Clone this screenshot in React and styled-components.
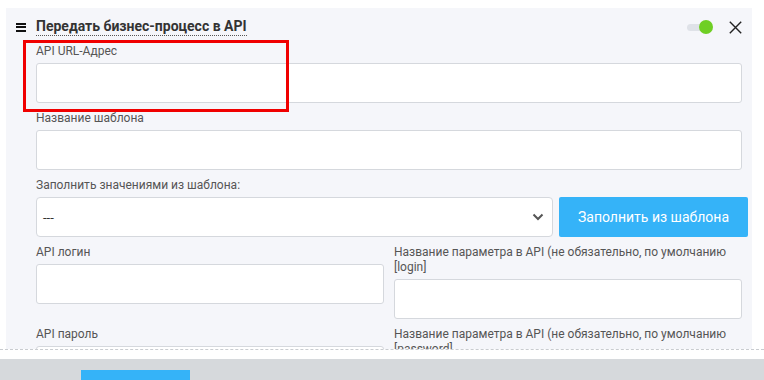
import React from "react";
import styled, { createGlobalStyle } from "styled-components";

const GlobalStyle = createGlobalStyle`
  html, body { margin: 0; padding: 0; background: #fff; }
  body { font-family: Roboto, "Liberation Sans", Arial, sans-serif; }
  * { box-sizing: border-box; }
`;

const Page = styled.div`
  width: 764px;
  height: 380px;
  overflow: hidden;
  display: flex;
  flex-direction: column;
  background: #fff;
`;

const ScrollArea = styled.div`
  height: 349px;
  flex: none;
  overflow: hidden;
  padding: 8px 12px 0 6px;
`;

const Panel = styled.section`
  position: relative;
  background: #f5f6fa;
  padding: 10px 10px 0 10px;
  min-height: 400px;
`;

const Header = styled.header`
  display: flex;
  align-items: center;
  height: 18px;
`;

const Burger = styled.span`
  display: flex;
  flex-direction: column;
  justify-content: space-between;
  width: 10px;
  height: 9px;
  margin-right: 10px;
  & > i {
    display: block;
    height: 2px;
    background: #111;
  }
`;

const Title = styled.h2`
  margin: 0;
  font-size: 14px;
  font-weight: 700;
  line-height: 17px;
  color: #333;
  border-bottom: 1px dotted #555;
`;

const HeaderTools = styled.div`
  margin-left: auto;
  display: flex;
  align-items: center;
  gap: 16px;
`;

const Toggle = styled.span`
  position: relative;
  width: 26px;
  height: 14px;
  display: block;
  &::before {
    content: "";
    position: absolute;
    left: 0;
    top: 4px;
    width: 24px;
    height: 7px;
    border-radius: 4px;
    background: #dfe2e8;
  }
  &::after {
    content: "";
    position: absolute;
    right: 0;
    top: 0;
    width: 14px;
    height: 14px;
    border-radius: 50%;
    background: #6fcf24;
  }
`;

const CloseBtn = styled.button`
  border: 0;
  background: none;
  padding: 0;
  width: 13px;
  height: 13px;
  display: block;
  cursor: pointer;
`;

const Body = styled.div`
  padding-left: 20px;
  margin-top: 8px;
  display: flex;
  flex-direction: column;
  gap: 8px;
`;

const Field = styled.div`
  display: flex;
  flex-direction: column;
  min-width: 0;
`;

const Label = styled.label`
  font-size: 12px;
  line-height: 15px;
  color: #555;
  margin-bottom: 4px;
`;

const Input = styled.input`
  height: 40px;
  width: 100%;
  border: 1px solid #d5d8dd;
  border-radius: 3px;
  background: #fff;
  padding: 0 10px;
  font: inherit;
  font-size: 13px;
  outline: none;
`;

const SelectRow = styled.div`
  display: flex;
  gap: 6px;
  margin-right: -6px;
`;

const SelectBox = styled.div`
  flex: 1;
  height: 40px;
  border: 1px solid #d5d8dd;
  border-radius: 4px;
  background: #fff;
  display: flex;
  align-items: center;
  padding: 0 8px 0 6px;
  font-size: 13px;
  color: #333;
  & > span { flex: 1; }
`;

const PrimaryButton = styled.button`
  width: 189px;
  height: 40px;
  border: 0;
  border-radius: 2px;
  background: #35b3f8;
  color: #fff;
  font: inherit;
  font-size: 14px;
  cursor: pointer;
`;

const TwoCols = styled.div`
  display: grid;
  grid-template-columns: 1fr 1fr;
  column-gap: 10px;
  align-items: start;
`;

const RedFrame = styled.div`
  position: absolute;
  left: 17px;
  top: 32px;
  width: 266px;
  height: 72px;
  border: 3px solid #f00000;
  pointer-events: none;
`;

const Footer = styled.footer`
  flex: 1;
  border-top: 1px dashed #c9ccd0;
  padding-top: 9px;
  background: #fff;
  display: flex;
  flex-direction: column;
`;

const FooterBar = styled.div`
  flex: 1;
  background: #d6d9dc;
  padding: 11px 0 0 81px;
`;

const FooterButton = styled.button`
  width: 109px;
  height: 34px;
  border: 0;
  background: #35b3f8;
  display: block;
`;

const Chevron = () => (
  <svg width="12" height="8" viewBox="0 0 12 8">
    <path d="M1.5 1.5 L6 6 L10.5 1.5" fill="none" stroke="#555" strokeWidth="2" />
  </svg>
);

export default function App() {
  return (
    <Page>
      <GlobalStyle />
      <ScrollArea>
        <Panel>
          <Header>
            <Burger><i /><i /><i /></Burger>
            <Title>Передать бизнес-процесс в API</Title>
            <HeaderTools>
              <Toggle />
              <CloseBtn aria-label="close">
                <svg width="13" height="13" viewBox="0 0 13 13">
                  <path d="M0.8 0.8 L12.2 12.2 M12.2 0.8 L0.8 12.2" stroke="#222" strokeWidth="1.4" />
                </svg>
              </CloseBtn>
            </HeaderTools>
          </Header>
          <Body>
            <Field>
              <Label>API URL-Адрес</Label>
              <Input />
            </Field>
            <Field>
              <Label>Название шаблона</Label>
              <Input />
            </Field>
            <Field>
              <Label>Заполнить значениями из шаблона:</Label>
              <SelectRow>
                <SelectBox>
                  <span>---</span>
                  <Chevron />
                </SelectBox>
                <PrimaryButton>Заполнить из шаблона</PrimaryButton>
              </SelectRow>
            </Field>
            <TwoCols>
              <Field>
                <Label>API логин</Label>
                <Input />
              </Field>
              <Field>
                <Label>Название параметра в API (не обязательно, по умолчанию [login]</Label>
                <Input />
              </Field>
            </TwoCols>
            <TwoCols>
              <Field>
                <Label>API пароль</Label>
                <Input />
              </Field>
              <Field>
                <Label>Название параметра в API (не обязательно, по умолчанию [password]</Label>
                <Input />
              </Field>
            </TwoCols>
          </Body>
          <RedFrame />
        </Panel>
      </ScrollArea>
      <Footer>
        <FooterBar>
          <FooterButton />
        </FooterBar>
      </Footer>
    </Page>
  );
}
